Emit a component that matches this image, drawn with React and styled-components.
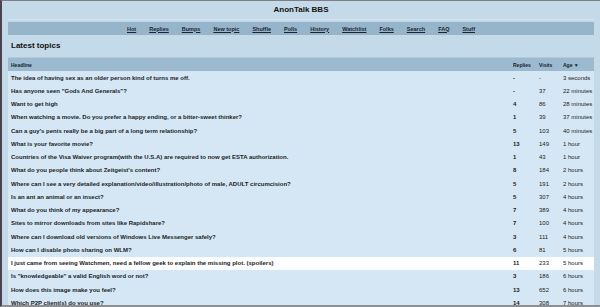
import React from 'react';
import styled, { createGlobalStyle } from 'styled-components';

const GlobalStyle = createGlobalStyle`
  html, body {
    margin: 0;
    padding: 0;
    background: #c5dae8;
  }
  body {
    font-family: "Liberation Sans", Arial, sans-serif;
    color: #111;
  }
`;

const Frame = styled.div`
  box-sizing: border-box;
  height: 307px;
  overflow: hidden;
  border-top: 1px solid #7d7f84;
  border-left: 2px solid #4b4350;
  border-bottom: 2px solid #8d8f93;
  padding: 0 6px;
  background: #c5dae8;
`;

const Title = styled.h1`
  margin: 0;
  height: 18px;
  line-height: 18px;
  text-align: center;
  font-size: 8px;
  font-weight: 700;
  border-bottom: 1px solid #d4e4ef;
`;

const Nav = styled.nav`
  margin-top: 2px;
  height: 13px;
  background: #96b5cb;
  display: flex;
  justify-content: center;
  align-items: center;
  gap: 13px;
`;

const NavLink = styled.a`
  font-size: 5.5px;
  font-weight: 700;
  color: #1c2330;
  text-decoration: underline;
`;

const SectionTitle = styled.h2`
  margin: 0;
  height: 22px;
  line-height: 22px;
  font-size: 8px;
  font-weight: 700;
  padding-left: 3px;
`;

const Table = styled.div`
  border-top: 1px solid #b3c9d8;
  background: #d5e7f4;
`;

const Row = styled.div`
  display: grid;
  grid-template-columns: 1fr 26px 24px 33px;
  align-items: center;
  height: ${p => (p.$head ? '13px' : '13.25px')};
  background: ${p => (p.$head ? '#9bbad0' : p.$hot ? '#fdfeff' : 'transparent')};
`;

const Cell = styled.div`
  padding-left: ${p => (p.$first ? '3px' : '2px')};
  font-size: ${p => (p.$head ? '5px' : '6px')};
  font-weight: ${p => (p.$bold ? 700 : 400)};
  color: ${p => (p.$head ? '#16202c' : '#222')};
  white-space: nowrap;
  overflow: hidden;
`;

const TopicLink = styled.a`
  color: #1a1d26;
  font-weight: 700;
  text-decoration: underline;
`;

const navItems = ['Hot', 'Replies', 'Bumps', 'New topic', 'Shuffle', 'Polls', 'History', 'Watchlist', 'Folks', 'Search', 'FAQ', 'Stuff'];

const topics = [
  ['The idea of having sex as an older person kind of turns me off.', '-', '-', '3 seconds'],
  ['Has anyone seen "Gods And Generals"?', '-', '37', '22 minutes'],
  ['Want to get high', '4', '86', '28 minutes'],
  ['When watching a movie. Do you prefer a happy ending, or a bitter-sweet thinker?', '1', '39', '37 minutes'],
  ["Can a guy's penis really be a big part of a long term relationship?", '5', '103', '40 minutes'],
  ['What is your favorite movie?', '13', '149', '1 hour'],
  ['Countries of the Visa Waiver program(with the U.S.A) are required to now get ESTA authorization.', '1', '43', '1 hour'],
  ["What do you people think about Zeitgeist's content?", '8', '184', '2 hours'],
  ['Where can I see a very detailed explanation/video/illustration/photo of male, ADULT circumcision?', '5', '191', '2 hours'],
  ['Is an ant an animal or an insect?', '5', '307', '4 hours'],
  ['What do you think of my appearance?', '7', '389', '4 hours'],
  ['Sites to mirror downloads from sites like Rapidshare?', '7', '100', '4 hours'],
  ['Where can I download old versions of Windows Live Messenger safely?', '3', '111', '4 hours'],
  ['How can I disable photo sharing on WLM?', '6', '81', '5 hours'],
  ['I just came from seeing Watchmen, need a fellow geek to explain the missing plot. (spoilers)', '11', '233', '5 hours', true],
  ['Is "knowledgeable" a valid English word or not?', '3', '186', '6 hours'],
  ['How does this image make you feel?', '13', '652', '6 hours'],
  ['Which P2P client(s) do you use?', '14', '308', '7 hours'],
];

export default function App() {
  return (
    <>
      <GlobalStyle />
      <Frame>
        <Title>AnonTalk BBS</Title>
        <Nav>
          {navItems.map(n => (
            <NavLink key={n} href="#">{n}</NavLink>
          ))}
        </Nav>
        <SectionTitle>Latest topics</SectionTitle>
        <Table>
          <Row $head>
            <Cell $head $bold $first>Headline</Cell>
            <Cell $head $bold>Replies</Cell>
            <Cell $head $bold>Visits</Cell>
            <Cell $head $bold>Age ▼</Cell>
          </Row>
          {topics.map(([title, replies, visits, age, hot]) => (
            <Row key={title} $hot={hot}>
              <Cell $first><TopicLink href="#">{title}</TopicLink></Cell>
              <Cell $bold>{replies}</Cell>
              <Cell>{visits}</Cell>
              <Cell>{age}</Cell>
            </Row>
          ))}
        </Table>
      </Frame>
    </>
  );
}
